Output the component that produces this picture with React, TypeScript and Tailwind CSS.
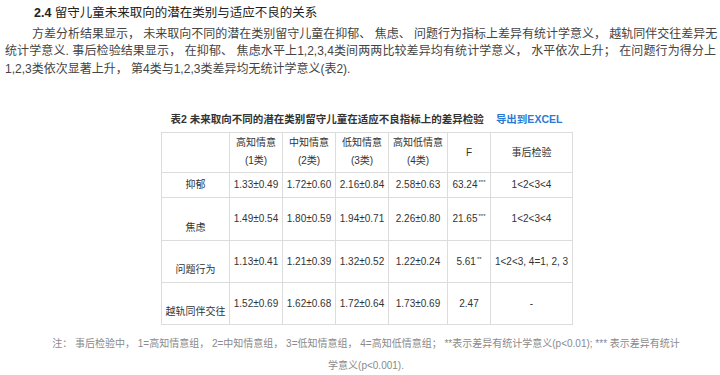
const FONT = "font-['Liberation_Sans','Noto_Sans_CJK_SC',sans-serif]";

const headers = [
    { top: "高知情意", bottom: "(1类)" },
    { top: "中知情意", bottom: "(2类)" },
    { top: "低知情意", bottom: "(3类)" },
    { top: "高知低情意", bottom: "(4类)" },
];

const rows = [
    { label: "抑郁", values: ["1.33±0.49", "1.72±0.60", "2.16±0.84", "2.58±0.63"], f: "63.24", sig: "***", post: "1<2<3<4", h: "h-[25px]", low: false },
    { label: "焦虑", values: ["1.49±0.54", "1.80±0.59", "1.94±0.71", "2.26±0.80"], f: "21.65", sig: "***", post: "1<2<3<4", h: "h-[43px]", low: true },
    { label: "问题行为", values: ["1.13±0.41", "1.21±0.39", "1.32±0.52", "1.22±0.24"], f: "5.61", sig: "**", post: "1<2<3, 4=1, 2, 3", h: "h-[42px]", low: true },
    { label: "越轨同伴交往", values: ["1.52±0.69", "1.62±0.68", "1.72±0.64", "1.73±0.69"], f: "2.47", sig: "", post: "-", h: "h-[42px]", low: true },
];

const cell = "border border-[#dcdcdc] p-0 text-center";

const App = () => {
    return (
        <div className={`${FONT} w-[720px] h-[375px] bg-white overflow-hidden`}>
            <h2 className="pl-[34px] pt-[2px] text-[12.5px] leading-[22px] text-[#222]">
                <span className="font-bold">2.4</span> 留守儿童未来取向的潜在类别与适应不良的关系
            </h2>
            <div className="pl-[5px] pt-[2px] w-[716px] text-[12px] leading-[17.3px] text-[#444]">
                <p className="pl-[27px] whitespace-nowrap text-justify [text-align-last:justify]">
                    方差分析结果显示， 未来取向不同的潜在类别留守儿童在抑郁、 焦虑、 问题行为指标上差异有统计学意义， 越轨同伴交往差异无
                </p>
                <p className="whitespace-nowrap text-justify [text-align-last:justify]">
                    统计学意义. 事后检验结果显示， 在抑郁、 焦虑水平上1,2,3,4类间两两比较差异均有统计学意义， 水平依次上升； 在问题行为得分上
                </p>
                <p className="whitespace-nowrap">
                    1,2,3类依次显著上升， 第4类与1,2,3类差异均无统计学意义(表2).
                </p>
            </div>

            <div className="ml-[161px] w-[411px] mt-[33px]">
                <div className="flex justify-center items-center gap-[12px] text-[10.5px] leading-[16px] font-bold">
                    <span className="text-[#333]">表2 未来取向不同的潜在类别留守儿童在适应不良指标上的差异检验</span>
                    <span className="text-[#2b7bd4]">导出到EXCEL</span>
                </div>
                <table className="mt-[5px] w-[411px] table-fixed border-collapse text-[10px] text-[#333]">
                    <colgroup>
                        <col className="w-[68px]" />
                        <col className="w-[53px]" />
                        <col className="w-[53px]" />
                        <col className="w-[53px]" />
                        <col className="w-[59px]" />
                        <col className="w-[43px]" />
                        <col className="w-[82px]" />
                    </colgroup>
                    <thead>
                        <tr className="h-[40px]">
                            <th className={cell}></th>
                            {headers.map((item) => (
                                <th key={item.top} className={`${cell} font-normal leading-[18px] whitespace-nowrap`}>
                                    <div>{item.top}</div>
                                    <div>{item.bottom}</div>
                                </th>
                            ))}
                            <th className={`${cell} font-normal`}>F</th>
                            <th className={`${cell} font-normal`}>事后检验</th>
                        </tr>
                    </thead>
                    <tbody>
                        {rows.map((row) => (
                            <tr key={row.label} className={row.h}>
                                <td className={`${cell} whitespace-nowrap ${row.low ? "align-bottom pb-[5px]" : "align-middle"}`}>
                                    {row.label}
                                </td>
                                {row.values.map((value) => (
                                    <td key={value} className={`${cell} whitespace-nowrap`}>{value}</td>
                                ))}
                                <td className={`${cell} whitespace-nowrap`}>
                                    {row.f}
                                    {row.sig && <sup className="text-[6px] -top-[4px] ml-[1px]">{row.sig}</sup>}
                                </td>
                                <td className={`${cell} whitespace-nowrap`}>{row.post}</td>
                            </tr>
                        ))}
                    </tbody>
                </table>
            </div>

            <div className="mt-[8px] w-[732px] text-center text-[10px] leading-[22px] text-[#8a8a8a]">
                <div className="whitespace-nowrap">
                    注： 事后检验中， 1=高知情意组， 2=中知情意组， 3=低知情意组， 4=高知低情意组； **表示差异有统计学意义(p&lt;0.01); *** 表示差异有统计
                </div>
                <div>学意义(p&lt;0.001).</div>
            </div>
        </div>
    );
};

export default App;
